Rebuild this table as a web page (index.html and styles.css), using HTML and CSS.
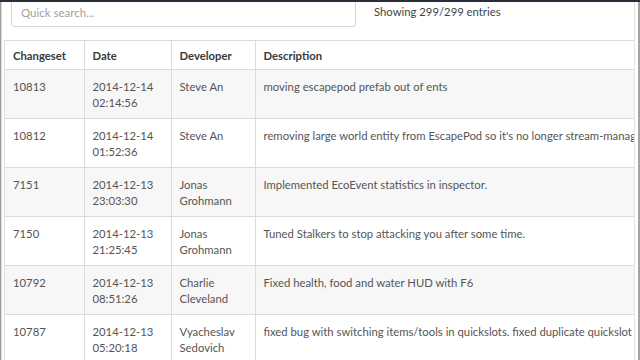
FILE: index.html
```html
<!DOCTYPE html>
<html>
<head>
<meta charset="utf-8">
<link rel="stylesheet" href="styles.css">
</head>
<body>
<div class="frame">
  <div class="page">
    <div class="toolbar">
      <input class="search" type="text" placeholder="Quick search...">
      <span class="count">Showing 299/299 entries</span>
    </div>
    <div class="table-wrap">
      <table class="log">
        <colgroup>
          <col class="c-id"><col class="c-date"><col class="c-dev"><col class="c-desc">
        </colgroup>
        <thead>
          <tr><th>Changeset</th><th>Date</th><th>Developer</th><th>Description</th></tr>
        </thead>
        <tbody>
          <tr><td>10813</td><td>2014-12-14 02:14:56</td><td>Steve An</td><td class="desc">moving escapepod prefab out of ents</td></tr>
          <tr><td>10812</td><td>2014-12-14 01:52:36</td><td>Steve An</td><td class="desc">removing large world entity from EscapePod so it's no longer stream-managed</td></tr>
          <tr><td>7151</td><td>2014-12-13 23:03:30</td><td>Jonas Grohmann</td><td class="desc">Implemented EcoEvent statistics in inspector.</td></tr>
          <tr><td>7150</td><td>2014-12-13 21:25:45</td><td>Jonas Grohmann</td><td class="desc">Tuned Stalkers to stop attacking you after some time.</td></tr>
          <tr><td>10792</td><td>2014-12-13 08:51:26</td><td>Charlie Cleveland</td><td class="desc">Fixed health, food and water HUD with F6</td></tr>
          <tr><td>10787</td><td>2014-12-13 05:20:18</td><td>Vyacheslav Sedovich</td><td class="desc">fixed bug with switching items/tools in quickslots. fixed duplicate quickslot assignment</td></tr>
        </tbody>
      </table>
    </div>
  </div>
</div>
</body>
</html>
```

FILE: styles.css
```css
html, body {
  margin: 0;
  padding: 0;
  width: 640px;
  height: 360px;
  overflow: hidden;
  background: #fff;
}
body {
  border-top: 2px solid #2c2d3b;
  box-sizing: border-box;
  font-family: Lato, "Open Sans", sans-serif;
  font-size: 11.3px;
  color: #555;
}
.frame {
  height: 358px;
  border-left: 1px solid #9e9e9e;
  border-right: 2px solid #a4a4a4;
  padding-right: 3px;
  box-sizing: border-box;
  background: #fff;
}
.page {
  height: 100%;
  border-left: 1px solid #d8d8d8;
  border-right: 1px solid #e2e2e2;
  overflow: hidden;
}
.toolbar {
  display: flex;
  align-items: flex-start;
  height: 38px;
}
.search {
  margin: -4px 0 0 9px;
  width: 345px;
  height: 29px;
  box-sizing: border-box;
  border: 1px solid #d4d4d4;
  border-radius: 3px;
  padding: 0 9px;
  font-family: Lato, sans-serif;
  font-size: 11.5px;
  color: #555;
  outline: none;
}
.search::placeholder {
  color: #a0a0a0;
}
.count {
  margin-left: 18px;
  line-height: 16px;
  padding-top: 2px;
  color: #444;
}
.table-wrap {
  margin-left: 2px;
  border-top: 1px solid #dcdcdc;
  border-left: 1px solid #dcdcdc;
  overflow: hidden;
}
.log {
  border-collapse: collapse;
  table-layout: fixed;
  width: 1000px;
}
.c-id { width: 79px; }
.c-date { width: 87px; }
.c-dev { width: 84px; }
.log th, .log td {
  text-align: left;
  vertical-align: top;
  line-height: 16px;
  border-right: 1px solid #dcdcdc;
  border-bottom: 1px solid #dcdcdc;
}
.log th {
  padding: 7px 8px 5px;
  font-weight: bold;
  color: #3a3a3a;
  background: #fff;
}
.log td {
  padding: 9px 8px 7px;
  color: #555;
}
.log td.desc {
  white-space: nowrap;
}
.log tbody tr:nth-child(odd) td {
  background: #f7f7f7;
}
```
